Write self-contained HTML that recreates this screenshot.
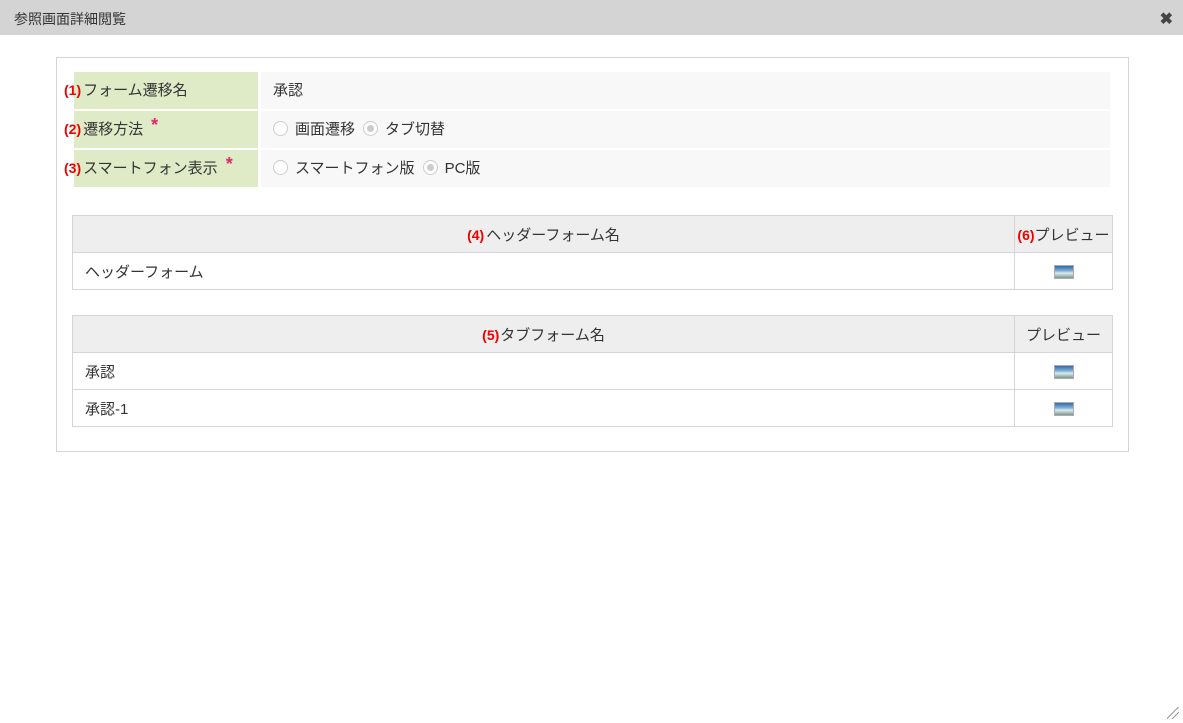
<!DOCTYPE html>
<html><head><meta charset="utf-8"><style>
*{box-sizing:border-box;margin:0;padding:0}
body{width:1183px;height:723px;background:#fff;font-family:"Liberation Sans","Noto Sans CJK JP",sans-serif;font-size:15px;color:#333;position:relative;overflow:hidden}
.title{position:absolute;left:0;top:0;width:1183px;height:35px;background:#d4d4d4;padding:9px 14px;font-size:14px;color:#333}
.close{position:absolute;right:10px;top:9px;font-size:16px;font-weight:bold;color:#444}
.box{position:absolute;left:56px;top:57px;width:1073px;height:395px;border:1px solid #d5d5d5}
.row{position:absolute;left:74px;width:1036px;height:37px}
.lab{position:absolute;left:0;top:0;width:184px;height:100%;background:#deebc6;padding:7px 0 0 0}
.val{position:absolute;left:187px;top:0;right:0;height:100%;background:#f8f8f8;padding:7px 0 0 12px}
.n{color:#e00;font-weight:bold;margin-left:-10px;margin-right:2px;font-size:14px}
.req{color:#e2266a;font-weight:bold;margin-left:8px;font-size:18px;position:relative;top:-3px}
.rad{display:inline-block;width:15px;height:15px;border:1px solid #ccc;border-radius:50%;vertical-align:-2px;margin-right:7px;background:#fff;position:relative}
.rad.on{margin-left:8px}
.rad.on::after{content:"";position:absolute;left:3px;top:3px;width:7px;height:7px;border-radius:50%;background:#ccc}
table{position:absolute;left:72px;width:1041px;border-collapse:collapse}
td,th{border:1px solid #d5d5d5;height:37px;font-weight:normal;font-size:15px}
th{background:#eee;text-align:center;white-space:nowrap}
td{padding-left:12px}
td.ic,th.ic{width:98px;text-align:center;padding:0}
.img{display:inline-block;width:20px;height:14px;border:1px solid #aab;background:linear-gradient(#2f6aa8 0,#7fb0d8 40%,#dde9ee 60%,#7a9a86 100%);vertical-align:middle}
.grip{position:absolute;right:4px;bottom:4px;width:12px;height:12px;background:linear-gradient(135deg,transparent 45%,#999 45%,#999 52%,transparent 52%,transparent 68%,#999 68%,#999 75%,transparent 75%)}
</style></head><body>
<div class="title">参照画面詳細閲覧<span class="close">✖</span></div>
<div class="box"></div>
<div class="row" style="top:72px"><div class="lab"><span class="n">(1)</span>フォーム遷移名</div><div class="val">承認</div></div>
<div class="row" style="top:111px"><div class="lab"><span class="n">(2)</span>遷移方法<span class="req">*</span></div><div class="val"><span class="rad"></span>画面遷移<span class="rad on"></span>タブ切替</div></div>
<div class="row" style="top:150px"><div class="lab"><span class="n">(3)</span>スマートフォン表示<span class="req">*</span></div><div class="val"><span class="rad"></span>スマートフォン版<span class="rad on"></span>PC版</div></div>
<table style="top:215px"><tr><th><span class="n" style="margin:0 2px 0 0">(4)</span>ヘッダーフォーム名</th><th class="ic"><span class="n" style="margin:0">(6)</span>プレビュー</th></tr>
<tr><td>ヘッダーフォーム</td><td class="ic"><span class="img"></span></td></tr></table>
<table style="top:315px"><tr><th><span class="n" style="margin:0 1px 0 0">(5)</span>タブフォーム名</th><th class="ic">プレビュー</th></tr>
<tr><td>承認</td><td class="ic"><span class="img"></span></td></tr>
<tr><td>承認-1</td><td class="ic"><span class="img"></span></td></tr></table>
<div class="grip"></div>
</body></html>
